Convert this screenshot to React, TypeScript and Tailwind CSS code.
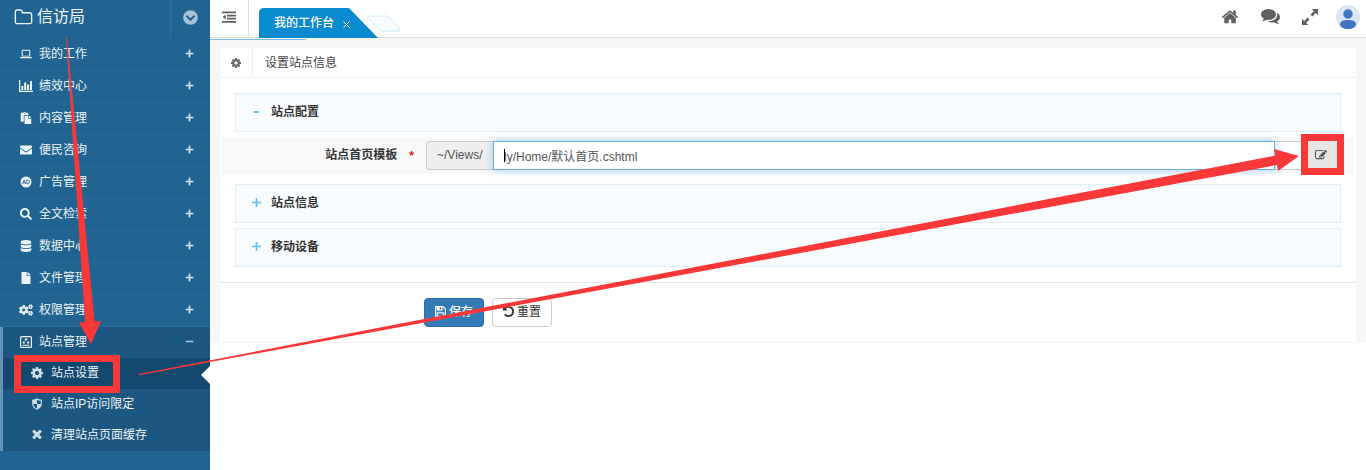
import React from 'react';
import type { IconType } from 'react-icons';
import {
  FaChevronCircleDown,
  FaCogs,
  FaDatabase,
  FaEnvelope,
  FaFile,
  FaMinus,
  FaPaste,
  FaPlus,
  FaSearch,
} from 'react-icons/fa';

type IconProps = { className?: string };
type AnyIcon = IconType | ((p: IconProps) => React.ReactElement);

const FolderIcon = ({ className }: IconProps) => (
  <svg className={className} viewBox="0 0 1792 1792" fill="currentColor" aria-hidden="true">
    <path d="M1600 1312v-704q0-40-28-68t-68-28h-704q-40 0-68-28t-28-68v-64q0-40-28-68t-68-28h-320q-40 0-68 28t-28 68v960q0 40 28 68t68 28h1216q40 0 68-28t28-68zm128-704v704q0 92-66 158t-158 66h-1216q-92 0-158-66t-66-158v-960q0-92 66-158t158-66h320q92 0 158 66t66 158v32h672q92 0 158 66t66 158z" />
  </svg>
);

const CogIcon = ({ className }: IconProps) => (
  <svg className={className} viewBox="128 128 1536 1536" fill="currentColor" aria-hidden="true">
    <path d="M1152 896q0-106-75-181t-181-75-181 75-75 181 75 181 181 75 181-75 75-181zm512-109v222q0 12-8 23t-20 13l-185 28q-19 54-39 91 35 50 107 138 10 12 10 25t-9 23q-27 37-99 108t-94 71q-12 0-26-9l-138-108q-44 23-91 38-16 136-29 186-7 28-36 28h-222q-14 0-24.500-8.500t-11.500-21.500l-28-184q-49-16-90-37l-141 107q-10 9-25 9-14 0-25-11-126-114-165-168-7-10-7-23 0-12 8-23 15-21 51-66.500t54-70.500q-27-50-41-99l-183-27q-13-2-21-12.500t-8-23.500v-222q0-12 8-23t19-13l186-28q14-46 39-92-40-57-107-138-10-12-10-24 0-10 9-23 26-36 98.500-107.500t94.500-71.500q13 0 26 10l138 107q44-23 91-38 16-136 29-186 7-28 36-28h222q14 0 24.500 8.500t11.500 21.500l28 184q49 16 90 37l142-107q9-9 24-9 13 0 25 10 129 119 165 170 7 8 7 22 0 12-8 23-15 21-51 66.500t-54 70.500q26 50 41 98l183 28q13 2 21 12.500t8 23.500z" />
  </svg>
);

const HomeIcon = ({ className }: IconProps) => (
  <svg className={className} viewBox="0 200 1792 1400" fill="currentColor" aria-hidden="true">
    <path d="M1472 992v480q0 26-19 45t-45 19h-384v-384h-256v384h-384q-26 0-45-19t-19-45v-480q0-1 .5-3t.5-3l575-474 575 474q1 2 1 6zm223-69l-62 74q-8 9-21 11h-3q-13 0-21-7l-692-577-692 577q-12 8-24 7-13-2-21-11l-62-74q-8-10-7-23.500t11-21.500l719-599q32-26 76-26t76 26l244 204v-195q0-14 9-23t23-9h192q14 0 23 9t9 23v408l219 182q10 8 11 21.500t-7 23.500z" />
  </svg>
);

const CommentsIcon = ({ className }: IconProps) => (
  <svg className={className} viewBox="0 256 1792 1408" fill="currentColor" aria-hidden="true">
    <path d="M1408 768q0 139-94 257t-256.500 186.500-353.500 68.500q-86 0-176-16-124 88-278 128-36 9-86 16h-3q-11 0-20.500-8t-11.500-21q-1-3-1-6.500t.5-6.500 2-6l2.500-5 3.500-5.500 4-5 4.500-5 4-4.500q5-6 23-25t26-29.500 22.500-29 25-38.500 20.500-44q-124-72-195-177t-71-224q0-139 94-257t256.500-186.500 353.500-68.500 353.500 68.500 256.500 186.500 94 257zm384 256q0 120-71 224.500t-195 176.500q10 24 20.500 44t25 38.500 22.500 29 26 29.500 23 25q1 1 4 4.500t4.500 5 4 5 3.500 5.500l2.500 5 2 6 .5 6.500-1 6.500q-3 14-13 22t-22 7q-50-7-86-16-154-40-278-128-90 16-176 16-271 0-472-132 58 4 88 4 161 0 309-45t264-129q125-92 192-212t67-254q0-77-23-152 129 71 204 178t75 230z" />
  </svg>
);

const TimesIcon = ({ className }: IconProps) => (
  <svg className={className} viewBox="128 260 1536 1536" fill="currentColor" aria-hidden="true">
    <path d="M1490 1322q0 40-28 68l-136 136q-28 28-68 28t-68-28l-294-294-294 294q-28 28-68 28t-68-28l-136-136q-28-28-28-68t28-68l294-294-294-294q-28-28-28-68t28-68l136-136q28-28 68-28t68 28l294 294 294-294q28-28 68-28t68 28l136 136q28 28 28 68t-28 68l-294 294 294 294q28 28 28 68z" />
  </svg>
);

const LaptopIcon = ({ className }: IconProps) => (
  <svg className={className} viewBox="0 0 14 14" fill="currentColor" aria-hidden="true">
    <path fillRule="evenodd" d="M3 2h8a1 1 0 0 1 1 1v6a1 1 0 0 1-1 1H3a1 1 0 0 1-1-1V3a1 1 0 0 1 1-1zm.2 1.100v5.800h7.600V3.100zM0 10.600h14v.6c0 .5-.7.8-1.400.8H1.400C.7 12 0 11.700 0 11.200z" />
  </svg>
);

const BarChartIcon = ({ className }: IconProps) => (
  <svg className={className} viewBox="0 0 14 12" fill="currentColor" aria-hidden="true">
    <path d="M0 0h1.200v10.800H14V12H0zM2.300 6h2v4h-2zM5.200 2.500h2V10h-2zM8.100 4.500h2V10h-2zM11 1h2v9h-2z" />
  </svg>
);

const AdIcon = ({ className }: IconProps) => (
  <svg className={className} viewBox="0 0 14 14" aria-hidden="true">
    <circle cx="7" cy="7" r="6.400" fill="currentColor" />
    <path d="M3 9.400 4.900 4.600 6.700 9.400M3.700 7.900h2.300M8 4.900v4.200h1c1.300 0 2-.8 2-2.100s-.7-2.100-2-2.100z" fill="none" stroke="#226491" strokeWidth="1" />
  </svg>
);

const SiteIcon = ({ className }: IconProps) => (
  <svg className={className} viewBox="0 0 14 14" fill="currentColor" aria-hidden="true">
    <rect x="1.600" y="1.600" width="10.800" height="10.800" rx="1" fill="none" stroke="currentColor" strokeWidth="1.200" />
    <path d="M5.800 3.500h2.400v2H5.800zM3.800 6.500h2v2h-2zM8.200 6.500h2v2h-2zM3.500 9.700h7v1.100h-7z" />
  </svg>
);

const ShieldIcon = ({ className }: IconProps) => (
  <svg className={className} viewBox="0 0 14 14" aria-hidden="true">
    <path d="M7 .3c1.600 1 3.400 1.500 5.600 1.600V7c0 3-2.400 5.300-5.600 6.800C3.800 12.300 1.400 10 1.400 7V1.900C3.600 1.800 5.400 1.300 7 .3z" fill="currentColor" />
    <path d="M7 2v5h4.300V3.100C9.700 3 8.300 2.700 7 2zM7 7H2.700c.1 2.300 1.900 4.100 4.300 5.400z" fill="#1b5780" />
  </svg>
);

const OutdentIcon = ({ className }: IconProps) => (
  <svg className={className} viewBox="0 0 14 12" fill="currentColor" aria-hidden="true">
    <path d="M0 .5h14v1.800H0zM5 3.700h9v1.800H5zM5 6.800h9v1.800H5zM0 9.900h14v1.800H0zM3.600 3.400v5.400L.6 6.100z" />
  </svg>
);

const ExpandIcon = ({ className }: IconProps) => (
  <svg className={className} viewBox="0 0 16 16" fill="currentColor" aria-hidden="true">
    <path d="M9.700 0H16v6.300l-2.200-2.200-3.400 3.400L8.500 5.600l3.400-3.400zM6.300 16H0V9.700l2.200 2.200 3.400-3.400 1.900 1.900-3.400 3.400z" />
  </svg>
);

const EditIcon = ({ className }: IconProps) => (
  <svg className={className} viewBox="0 0 1792 1536" fill="currentColor" aria-hidden="true">
    <path d="M888 1056l116-116-152-152-116 116v56h96v96h56zm440-720q-16-16-33 1L945 687q-17 17-1 33t33-1l350-350q17-17 1-33zm80 594v190q0 119-84.500 203.500T1120 1408H288q-119 0-203.500-84.500T0 1120V288Q0 169 84.500 84.500T288 0h832q63 0 117 25 15 7 18 23 3 17-9 29l-49 49q-14 14-32 8-23-6-45-6H288q-66 0-113 47t-47 113v832q0 66 47 113t113 47h832q66 0 113-47t47-113V994q0-13 9-22l64-64q15-15 35-7t20 29zm-96-738l288 288-672 672H640V864zm444 132l-92 92-288-288 92-92q28-28 68-28t68 28l152 152q28 28 28 68t-28 68z" />
  </svg>
);

const SaveIcon = ({ className }: IconProps) => (
  <svg className={className} viewBox="0 0 1536 1536" fill="currentColor" stroke="currentColor" strokeWidth="50" aria-hidden="true">
    <path d="M384 1408h768v-384H384zm896 0h128V512q0-14-10-38.500t-20-34.500l-281-281q-10-10-34-20t-39-10v416q0 40-28 68t-68 28H352q-40 0-68-28t-28-68V128H128v1280h128V992q0-40 28-68t68-28h832q40 0 68 28t28 68zM896 480V160q0-13-9.500-22.500T864 128H672q-13 0-22.500 9.500T640 160v320q0 13 9.500 22.500T672 512h192q13 0 22.500-9.500T896 480zm640 32v928q0 40-28 68t-68 28H96q-40 0-68-28t-28-68V96q0-40 28-68T96 0h928q40 0 88 20t76 48l280 280q28 28 48 76t20 88z" />
  </svg>
);

const UndoIcon = ({ className }: IconProps) => (
  <svg className={className} viewBox="0 0 1536 1536" fill="currentColor" aria-hidden="true">
    <path d="M1536 768q0 156-61 298t-164 245-245 164-298 61q-172 0-327-72.500T177 1260q-7-10-6.500-22.500t8.500-20.500l137-138q10-9 25-9 16 2 23 12 73 95 179 147t225 52q104 0 198.500-40.500T1130 1130t109.500-163.500T1280 768t-40.500-198.500T1130 406 966.500 296.500 768 256q-98 0-188 35.500T420 393l137 138q31 30 14 69-17 40-59 40H64q-26 0-45-19T0 576V128q0-42 40-59 39-17 69 14l130 129Q346 111 483.500 55.500T768 0q156 0 298 61t245 164 164 245 61 298z" />
  </svg>
);

const menu: { label: string; icon: AnyIcon }[] = [
  { label: '我的工作', icon: LaptopIcon },
  { label: '绩效中心', icon: BarChartIcon },
  { label: '内容管理', icon: FaPaste },
  { label: '便民咨询', icon: FaEnvelope },
  { label: '广告管理', icon: AdIcon },
  { label: '全文检索', icon: FaSearch },
  { label: '数据中心', icon: FaDatabase },
  { label: '文件管理', icon: FaFile },
  { label: '权限管理', icon: FaCogs },
];

const subMenu: { label: string; icon: AnyIcon; active?: boolean }[] = [
  { label: '站点设置', icon: CogIcon, active: true },
  { label: '站点IP访问限定', icon: ShieldIcon },
  { label: '清理站点页面缓存', icon: TimesIcon },
];

function Sidebar() {
  return (
    <aside className="w-[210px] shrink-0 bg-[#226491] text-xs text-[#edf4f9]">
      <header className="mb-px flex h-[38px]">
        <a href="#home" className="flex flex-1 items-center gap-1 pb-1 pl-3.5 text-base">
          <FolderIcon className="size-[19px]" />
          信访局
        </a>
        <button aria-label="展开" className="flex w-10 items-center justify-center border-l border-[#2e719e] pb-1 text-[#a9c3d6]">
          <FaChevronCircleDown className="size-[15px]" />
        </button>
      </header>
      <nav>
        {menu.map(({ label, icon: Icon }) => (
          <a key={label} href="#menu" className="flex h-8 items-center border-b border-[#2b6c99] pr-4 pb-0.5 pl-[19px]">
            <Icon className="mr-1.5 h-3 w-3.5" />
            <span className="flex-1">{label}</span>
            <FaPlus className="size-[9px] text-[#d5e2ec]" />
          </a>
        ))}
        <div className="border-l-3 border-[#6493bb] bg-[#1b5780]">
          <a href="#site" className="flex h-[31px] items-center pr-4 pb-0.5 pl-4">
            <SiteIcon className="mr-1.5 size-3.5" />
            <span className="flex-1">站点管理</span>
            <FaMinus className="size-[9px] text-[#a6c2dc]" />
          </a>
          {subMenu.map(({ label, icon: Icon, active }) => (
            <a
              key={label}
              href="#sub"
              className={`relative flex h-[31px] items-center pb-0.5 pl-7 ${active ? 'bg-[#13486f]' : ''}`}
            >
              <Icon className="mr-2 size-3 text-[#cfdde8]" />
              {label}
              {active && (
                <span className="absolute top-2 right-0 border-y-9 border-r-9 border-y-transparent border-r-white" />
              )}
            </a>
          ))}
        </div>
      </nav>
    </aside>
  );
}

function TopBar() {
  return (
    <header className="flex h-[38px] border-b border-[#dcdcdc] bg-white text-[#606060]">
      <button aria-label="收起菜单" className="flex w-[39px] items-center justify-center border-r border-[#ddd] pb-1">
        <OutdentIcon className="h-3 w-3.5" />
      </button>
      <div className="relative ml-2.5 flex w-[119px] items-center pt-2 pl-[15px] text-xs text-white">
        <svg className="absolute top-2 left-0 h-[30px] w-[144px]" viewBox="0 0 144 30" aria-hidden="true">
          <path d="M0 30V5q0-5 5-5h85l29 30z" fill="#0a8bd0" />
          <path d="M110 8h17q2 0 4 2l9 10q2 3-1 3h-15q-2 0-4-2l-11-11q-1-2 1-2z" fill="#fafdff" stroke="#ccecfb" />
        </svg>
        <a href="#desk" className="relative font-medium">我的工作台</a>
        <button aria-label="关闭" className="relative ml-[9px] pt-1">
          <svg className="size-[7px]" viewBox="0 0 7 7" stroke="#fff" aria-hidden="true">
            <path d="M.5.5l6 6M6.500.5l-6 6" />
          </svg>
        </button>
      </div>
      <div className="ml-auto flex items-center gap-[22px] pr-1.5 pb-1">
        <a href="#home" aria-label="首页"><HomeIcon className="h-3.5 w-[18px]" /></a>
        <a href="#msg" aria-label="消息"><CommentsIcon className="h-[15px] w-[19px]" /></a>
        <button aria-label="全屏"><ExpandIcon className="size-4" /></button>
        <a href="#me" aria-label="用户" className="-ml-1">
          <svg className="size-6" viewBox="0 0 24 24" aria-hidden="true">
            <circle cx="12" cy="12" r="12" fill="#dce6f5" />
            <circle cx="12" cy="9" r="4.700" fill="#4175c4" />
            <path d="M4 19.500c0-3.200 3.200-4.500 8-4.500s8 1.300 8 4.500c0 1.500-1 2.300-2 2.900-1.800 1-4 1.600-6 1.600s-4.200-.6-6-1.600c-1-.6-2-1.400-2-2.900z" fill="#4175c4" />
          </svg>
        </a>
      </div>
    </header>
  );
}

function Section({ title, open }: { title: string; open?: boolean }) {
  return (
    <button
      aria-expanded={!!open}
      className="mx-[15px] flex h-[39px] items-center border border-dotted border-[#c5e0f2] bg-[#f8fcff] pb-0.5 pl-4 font-bold text-[#333]"
    >
      <svg className="mr-2.5 size-[9px]" viewBox="0 0 9 9" fill="#5bc0f5" aria-hidden="true">
        <path d={open ? 'M2 4h5v2H2z' : 'M0 3.700h9v1.600H0zM3.700 0h1.600v9H3.700z'} />
      </svg>
      {title}
    </button>
  );
}

function SiteForm() {
  return (
    <section className="flex flex-col bg-white text-xs text-[#444]">
      <div className="flex h-[30px] items-center border-b border-[#eee]">
        <span className="flex h-full w-[33px] items-center justify-center border-r border-[#eee] text-[#666]">
          <CogIcon className="size-2.5" />
        </span>
        <h1 className="pl-3">设置站点信息</h1>
      </div>
      <form className="flex flex-col" onSubmit={(e) => e.preventDefault()}>
        <div className="flex flex-col pt-[15px]">
          <Section title="站点配置" open />
          <div className="mx-0.5 mt-[5px] mb-2.5 flex h-[37px] items-start bg-[#f8f8f8] pt-1 pr-[17px]">
            <label htmlFor="tpl" className="flex h-[29px] w-[204px] shrink-0 items-center justify-end pr-3 pb-0.5 font-bold text-[#333]">
              站点首页模板
              <span className="ml-3 pt-0.5 text-[#e02222]">*</span>
            </label>
            <span className="flex h-[29px] w-[67px] shrink-0 items-center rounded-l border border-r-0 border-[#ccc] bg-[#eee] pl-2.5 pb-0.5 text-[#555]">
              ~/Views/
            </span>
            <span className="relative z-10 flex flex-1">
              <input
                id="tpl"
                defaultValue="ly/Home/默认首页.cshtml"
                className="h-[29px] w-full border border-[#66afe9] bg-white pl-2.5 text-[#555] shadow-[0_0_8px_rgba(102,175,233,0.6)] outline-none"
              />
              <span className="absolute top-2 left-[11px] h-[13px] w-px bg-black" />
            </span>
            <button type="button" aria-label="选择" className="flex h-[29px] w-[33px] items-center justify-center border-y border-[#ccc] bg-white pb-1 font-bold text-[#333]">
              ...
            </button>
            <button type="button" aria-label="编辑" className="flex h-[29px] w-[29px] items-center justify-center rounded-r border-y border-[#e6e6e6] bg-[#e6e6e6] pr-1 pb-0.5 text-[#333]">
              <EditIcon className="h-2.5 w-3" />
            </button>
          </div>
          <Section title="站点信息" />
          <div className="h-[5px]" />
          <Section title="移动设备" />
        </div>
        <div className="mt-[15px] flex gap-2 border-y border-t-[#e7e7e7] border-b-[#f3f3f3] py-[15px] pl-[204px]">
          <button type="submit" className="flex h-[29px] w-[60px] items-center justify-center gap-[3px] rounded border border-[#2e6da4] bg-[#337ab7] pb-0.5 font-medium text-white">
            <SaveIcon className="size-[11px]" />
            保存
          </button>
          <button type="reset" className="flex h-[29px] w-[60px] items-center justify-center gap-[3px] rounded border border-[#ccc] bg-white pb-0.5 text-[#333]">
            <UndoIcon className="size-[11px]" />
            重置
          </button>
        </div>
      </form>
    </section>
  );
}

function Annotations() {
  return (
    <svg
      className="pointer-events-none absolute top-0 left-0 z-20 h-[470px] w-[1366px]"
      viewBox="0 0 1366 470"
      fill="#fb3838"
      aria-hidden="true"
    >
      <path d="M66 37h.8L94.500 321.500 101 321 91 344 79 322.500 85 322z" />
      <path d="M139 373.900 1275.500 155.500 1274 149 1299 156 1278 171 1277 165 139 375.200z" />
      <rect x="17.500" y="358.500" width="99" height="31" fill="none" stroke="#fb3838" strokeWidth="7" />
      <rect x="1304.500" y="137.500" width="36" height="34" fill="none" stroke="#fb3838" strokeWidth="7" />
    </svg>
  );
}

export default function App() {
  return (
    <div className="relative flex min-h-screen bg-white font-['Liberation_Sans','Noto_Sans_CJK_SC',sans-serif]">
      <Sidebar />
      <div className="min-w-0 flex-1">
        <TopBar />
        <main className="bg-[#f7f7f7] pt-px">
          <div className="h-px w-24 bg-[#7cbcea]" />
          <div className="px-2.5 pt-2">
            <SiteForm />
          </div>
        </main>
      </div>
      <Annotations />
    </div>
  );
}
